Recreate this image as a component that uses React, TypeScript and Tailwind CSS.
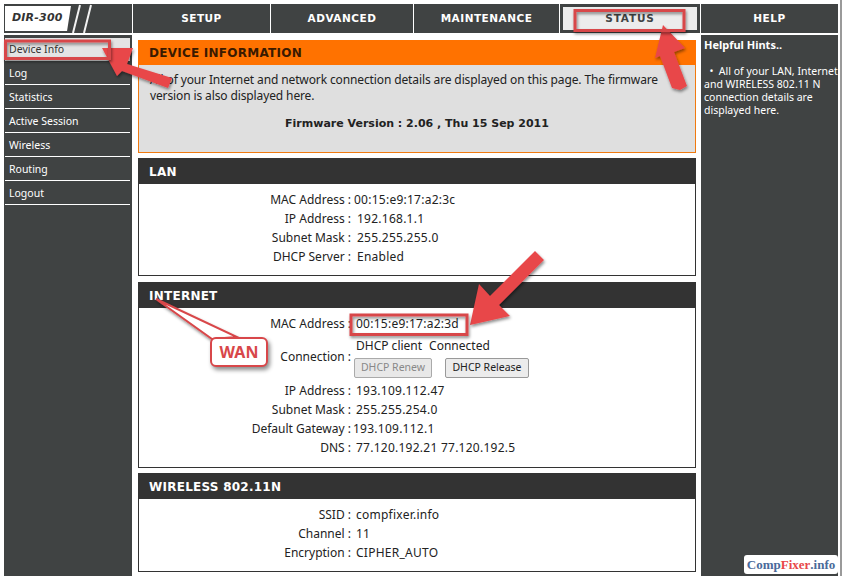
const sideLinks = ['Log', 'Statistics', 'Active Session', 'Wireless', 'Routing', 'Logout'];

const uiFont = "font-['Noto_Sans','Liberation_Sans',sans-serif]";
const headFont = "font-['DejaVu_Sans',sans-serif]";

function Tab({ label, className }: { label: string; className: string }) {
  return (
    <div className={`flex h-[29px] shrink-0 items-center justify-center bg-[#404343] pt-px text-[10.5px] font-bold tracking-[0.5px] text-white ${headFont} ${className}`}>
      {label}
    </div>
  );
}

function Row({ label, value, gap = 'pl-[6px]' }: { label: string; value: string; gap?: string }) {
  return (
    <div className="flex h-[19px] items-center">
      <div className="w-[212px] whitespace-pre text-right">{label} :</div>
      <div className={`whitespace-pre tracking-[0.25px] ${gap}`}>{value}</div>
    </div>
  );
}

function Section({ title, className, children }: { title: string; className: string; children: React.ReactNode }) {
  return (
    <section className={`border border-[#333] bg-white ${className}`}>
      <h2 className={`-mx-px -mt-px flex h-[26px] items-center bg-[#333333] pl-[11px] pt-px text-[12px] font-bold tracking-[0.25px] text-white ${headFont}`}>
        {title}
      </h2>
      {children}
    </section>
  );
}

export default function App() {
  return (
    <div className={`relative h-[576px] w-[842px] overflow-hidden bg-white text-[12px] text-[#222] ${uiFont}`}>
      <div className="flex h-full justify-between pl-[4px]">
        <div className="flex w-[834px] flex-col pt-[4px]">
          {/* Top bar */}
          <div className="flex h-[29px] gap-px">
            <div className="flex w-[128px] shrink-0 items-center bg-[#404343] pl-px">
              <div className="flex h-[25px] w-[66px] items-center bg-white pl-[7px] [clip-path:polygon(0_0,100%_0,94%_100%,0_100%)]">
                <span className={`text-[11px] font-bold italic tracking-[0.2px] text-[#333] ${headFont}`}>DIR-300</span>
              </div>
              <svg width="22" height="29" viewBox="0 0 22 29" className="ml-[1px]">
                <path d="M8 1 L1 29 M19 1 L12 29" stroke="#f2f2f2" strokeWidth="2" fill="none" />
              </svg>
            </div>
            <Tab label="SETUP" className="w-[137px]" />
            <Tab label="ADVANCED" className="w-[142px]" />
            <Tab label="MAINTENANCE" className="w-[145px]" />
            <div className="flex h-[29px] w-[140px] shrink-0 items-center justify-center border-[3px] border-[#404343] bg-[#ececec] pt-px">
              <span className={`text-[10.5px] font-bold tracking-[0.8px] text-[#404343] ${headFont}`}>STATUS</span>
            </div>
            <Tab label="HELP" className="w-[137px]" />
          </div>

          <div className="flex min-h-0 flex-1 pt-[2px]">
            {/* Left menu */}
            <nav className="w-[128px] shrink-0 bg-[#404343] pl-px pr-[2px] pt-[3px] text-[10.5px]">
              <div className="flex h-[23px] items-center bg-[#e4e4e4] pl-[4px] pt-px text-[#333]">Device Info</div>
              {sideLinks.map((link) => (
                <div key={link} className="flex h-[24px] items-center border-b border-white pl-[4px] pt-[2px] text-white">
                  {link}
                </div>
              ))}
            </nav>

            {/* Main column */}
            <main className="flex w-[569px] shrink-0 flex-col pl-[6px] pr-[5px] pt-[5px]">
              <section className="h-[113px] border border-[#f07a10] bg-[#dfdfdf]">
                <h1 className={`-mx-px -mt-px flex h-[25px] items-center bg-[#ff7200] pl-[11px] pt-px text-[12px] font-bold tracking-[0.25px] text-[#3a1a00] ${headFont}`}>
                  DEVICE INFORMATION
                </h1>
                <p className="px-[11px] pt-[7px] leading-[16px] tracking-[-0.12px]">
                  All of your Internet and network connection details are displayed on this page. The firmware version is also displayed here.
                </p>
                <p className={`pt-[12px] text-center text-[11px] font-bold ${headFont}`}>Firmware Version : 2.06 , Thu 15 Sep 2011</p>
              </section>

              <Section title="LAN" className="mt-[5px] h-[118px]">
                <div className="pt-[6px]">
                  <Row label="MAC Address" value="00:15:e9:17:a2:3c" gap="pl-[3px]" />
                  <Row label="IP Address" value="192.168.1.1" gap="pl-[6px]" />
                  <Row label="Subnet Mask" value="255.255.255.0" gap="pl-[6px]" />
                  <Row label="DHCP Server" value="Enabled" gap="pl-[6px]" />
                </div>
              </Section>

              <Section title="INTERNET" className="mt-[6px] h-[186px]">
                <div className="pt-[6px]">
                  <Row label="MAC Address" value="00:15:e9:17:a2:3d" gap="pl-[5px]" />
                  <div className="flex h-[48px] items-center">
                    <div className="w-[212px] text-right">Connection :</div>
                    <div className="pl-[3px]">
                      <div className="flex h-[19px] items-center gap-[7px] pl-[2px]">
                        <span>DHCP client</span>
                        <span>Connected</span>
                      </div>
                      <div className="flex gap-[13px] pt-[3px]">
                        <button className="h-[20px] w-[78px] rounded-[2px] border border-[#aaa] bg-[#e8e8e8] text-[10.5px] text-[#888]">DHCP Renew</button>
                        <button className="h-[20px] w-[84px] rounded-[2px] border border-[#999] bg-[#ececec] text-[10.5px] text-[#222]">DHCP Release</button>
                      </div>
                    </div>
                  </div>
                  <Row label="IP Address" value="193.109.112.47" gap="pl-[5px]" />
                  <Row label="Subnet Mask" value="255.255.254.0" gap="pl-[5px]" />
                  <Row label="Default Gateway" value="193.109.112.1" gap="pl-[2px]" />
                  <Row label="DNS" value="77.120.192.21 77.120.192.5" gap="pl-[5px]" />
                </div>
              </Section>

              <Section title="WIRELESS 802.11N" className="mt-[5px] h-[99px]">
                <div className="pt-[6px]">
                  <Row label="SSID" value="compfixer.info" gap="pl-[5px]" />
                  <Row label="Channel" value="11" gap="pl-[5px]" />
                  <Row label="Encryption" value="CIPHER_AUTO" gap="pl-[5px]" />
                </div>
              </Section>
            </main>

            {/* Help panel */}
            <aside className="w-[137px] shrink-0 bg-[#404343] pl-[3px] pt-[2px] text-[10.5px] leading-[13px] text-white">
              <div className="text-[11px] font-bold leading-[16px]">Helpful Hints..</div>
              <p className="whitespace-nowrap pt-[12px]">
                &nbsp;&nbsp;•&nbsp;&nbsp;All of your LAN, Internet
                <br />
                and WIRELESS 802.11 N
                <br />
                connection details are
                <br />
                displayed here.
              </p>
            </aside>
          </div>
        </div>
        <div className="w-[2px] bg-[#9a9a9a]" />
      </div>

      {/* Annotations drawn over the page */}
      <svg width="842" height="576" viewBox="0 0 842 576" className="pointer-events-none absolute left-0 top-0">
        <defs>
          <filter id="shadow" x="-20%" y="-20%" width="140%" height="140%">
            <feDropShadow dx="1" dy="2" stdDeviation="1.5" floodColor="#000" floodOpacity="0.45" />
          </filter>
        </defs>
        <g filter="url(#shadow)" fill="#e8474a">
          <polygon points="102,48 133,48 127,64 172,78 168,88 122,71 117,76" />
          <polygon points="663,25 685,48 674,52 687,86 680,90 672,88 660,56 655,58" />
          <polygon points="470,325 479,284 490,296 535,251 544,260 499,305 510,316" />
        </g>
        <polygon points="156,299 237,337 212,339" fill="#fff" stroke="#d8474a" strokeWidth="2" filter="url(#shadow)" />
        <g filter="url(#shadow)" fill="none" stroke="#d8474a" strokeWidth="3">
          <rect x="5.5" y="41" width="104" height="17.5" />
          <rect x="575" y="10.5" width="109" height="20" />
          <rect x="351" y="315" width="116" height="19.5" />
        </g>
      </svg>

      <div className="absolute left-[210px] top-[337px] flex h-[30px] w-[58px] items-center justify-center rounded-[6px] border-[2.5px] border-[#d8474a] bg-white text-[16px] font-bold text-[#d8474a] shadow-[2px_3px_4px_rgba(0,0,0,0.45)]">
        WAN
      </div>

      <div className="absolute left-[744px] top-[555px] flex h-[19px] w-[94px] items-center justify-center rounded-[3px] bg-white font-['Liberation_Serif',serif] text-[13px] font-bold text-[#4a6a9a]">
        Comp<span className="text-[#e8474a]">Fixer</span>.info
      </div>
    </div>
  );
}
